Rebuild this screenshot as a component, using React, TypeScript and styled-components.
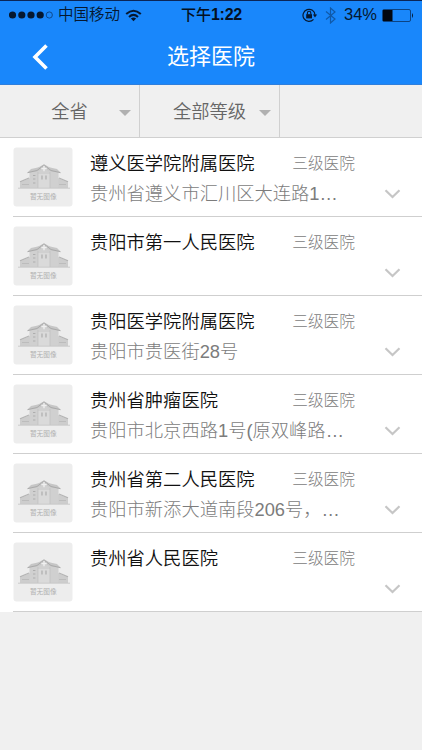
import React from 'react';
import styled, { createGlobalStyle } from 'styled-components';

const GlobalStyle = createGlobalStyle`
  * { box-sizing: border-box; }
  body {
    margin: 0;
    background: #f0f0f0;
    font-family: 'Liberation Sans', 'Noto Sans CJK SC', sans-serif;
  }
`;

const Screen = styled.div`
  width: 422px;
  height: 750px;
  background: #f0f0f0;
  overflow: hidden;
`;

const Top = styled.header`
  height: 85px;
  background: #1987fb;
  border-top: 1px solid #0b2556;
  border-bottom: 1px solid #2f7fdc;
`;

const StatusBar = styled.div`
  height: 28px;
  display: grid;
  grid-template-columns: 182px 1fr auto;
  align-items: center;
  padding: 0 8px 0 9px;
  color: #06182f;
  line-height: 28px;
  white-space: nowrap;
  svg { display: block; }
`;

const StatusGroup = styled.div<{ $gap?: number }>`
  display: flex;
  align-items: center;
  gap: ${(p) => p.$gap ?? 0}px;
`;

const Carrier = styled.span`
  font-weight: 350;
  font-size: 15.5px;
`;

const Clock = styled.div`
  margin-left: -10px;
  font-weight: 500;
  font-size: 15px;
  color: #041020;
`;

const ClockDigits = styled.b`
  font-size: 16px;
  letter-spacing: -0.3px;
`;

const Percent = styled.span`
  font-size: 16.5px;
  line-height: 26px;
  margin: 0 5px 2px 8px;
`;

const BluetoothIcon = styled.svg`
  margin-left: 7px;
`;

const NavBar = styled.div`
  height: 55px;
  display: grid;
  grid-template-columns: 80px 1fr 80px;
  align-items: center;
`;

const BackButton = styled.button`
  border: 0;
  background: none;
  padding: 0 0 0 32px;
  display: flex;
`;

const Title = styled.h1`
  margin: 0;
  color: #fff;
  font-size: 22px;
  font-weight: 400;
  line-height: 32px;
  text-align: center;
`;

const Filters = styled.nav`
  height: 53px;
  display: flex;
  border-bottom: 1px solid #d0d0d0;
`;

const Filter = styled.button`
  width: 140px;
  border: 0;
  border-right: 1px solid #d0d0d0;
  background: none;
  display: flex;
  align-items: center;
  padding: 2px 8px 0 20px;
  color: #666;
  font: 350 18.3px/26px 'Liberation Sans', 'Noto Sans CJK SC', sans-serif;
`;

const FilterLabel = styled.span`
  flex: 1;
  text-align: center;
`;

const Caret = styled.i`
  border: 6px solid transparent;
  border-top-color: #b0b0b0;
  border-bottom: 0;
  margin-top: 2px;
`;

const List = styled.ul`
  margin: 0;
  padding: 0 0 0 13px;
  list-style: none;
  background: #fff;
`;

const Row = styled.li`
  height: 79px;
  display: flex;
  padding-top: 9px;
  border-bottom: 1px solid #cfcfcf;
`;

const Thumb = styled.svg`
  display: block;
  flex: none;
  width: 60px;
  height: 60px;
`;

const Info = styled.div`
  width: 266px;
  margin-left: 17px;
  padding-top: 2px;
`;

const Line = styled.div`
  display: flex;
  height: 30px;
  justify-content: space-between;
`;

const Name = styled.span`
  color: #111;
  font-size: 18.3px;
  line-height: 30px;
  font-weight: 350;
`;

const Level = styled.span`
  color: #808080;
  font-size: 15.7px;
  line-height: 30px;
  font-weight: 300;
  margin-right: 1px;
`;

const Address = styled.div`
  color: #7c7c7c;
  font-size: 18.3px;
  font-weight: 300;
  line-height: 30px;
  white-space: nowrap;
`;

const Toggle = styled.button`
  border: 0;
  background: none;
  padding: 0;
  margin: 42px 0 0 28px;
  height: 10px;
`;

const ChevronIcon = styled.svg`
  display: block;
`;

const Wifi = () => (
  <svg width="17" height="13" viewBox="0 0 17 13">
    <g fill="none" stroke="#06182f" strokeWidth="2">
      <path d="M1.2 5.1 Q8.5 -1.7 15.8 5.1" />
      <path d="M4 8 Q8.5 3.8 13 8" />
    </g>
    <path d="M8.5 12.2 L5.9 9.6 Q8.5 7.6 11.1 9.6 Z" fill="#06182f" />
  </svg>
);

const RotationLock = () => (
  <svg width="16" height="14" viewBox="0 0 16 14">
    <path d="M11.5 11.3 A6 6 0 1 1 13 7" fill="none" stroke="#06182f" strokeWidth="1.2" />
    <path d="M10.9 6.5 H15.1 L13 9.4 Z" fill="#06182f" />
    <rect x="4.2" y="6.2" width="5.8" height="4.2" fill="#06182f" />
    <path d="M5.4 6.5 V5 a1.7 1.7 0 0 1 3.4 0 V6.5" fill="none" stroke="#06182f" strokeWidth="1.1" />
  </svg>
);

const Bluetooth = () => (
  <BluetoothIcon width="11" height="17" viewBox="0 0 11 17">
    <path d="M1 4.5 L10 12 L5.5 16 V1 L10 5 L1 12.5" fill="none" stroke="#1059a8" strokeWidth="1.2" />
  </BluetoothIcon>
);

const Battery = () => (
  <svg width="32" height="13" viewBox="0 0 32 13">
    <rect x="0.5" y="0.5" width="28" height="12" rx="1.5" fill="none" stroke="#0c4382" />
    <rect x="1" y="1" width="9.5" height="11" fill="#020710" />
    <path d="M30 4 q2 2.5 0 5z" fill="#06182f" />
  </svg>
);

const NoImage = () => (
  <Thumb viewBox="0 0 60 60">
    <rect x="0.5" y="0.5" width="59" height="59" rx="3" fill="#ededed" />
    <path d="M7 40.5 V35.5 L17 31 V41 H7z M55 40.5 V35.5 L45 31 V41 H55z" fill="#cdcdcd" />
    <path d="M7 34.8 L16 31 M55 34.8 L46 31" stroke="#b5b5b5" strokeWidth="1.3" />
    <path d="M16.5 41 V25 L31 17.5 L45.5 25 V41z" fill="#d0d0d0" />
    <path d="M25 41 V27 H37 V41z" fill="#dadada" />
    <path d="M14.5 25.5 L18 22 L26 20.3 L31 17.2 L36 20.3 L44 22 L47.5 25.5 L38 24.5 L31 21.5 L24 24.5z" fill="#c6c6c6" />
    <path d="M14.5 25.7 L24 23.5 L31 18 L38 23.5 L47.5 25.7" fill="none" stroke="#aaa" strokeWidth="1" />
    <path d="M31 18.8 V24.2 M28.3 21.5 H33.7" stroke="#f0f0f0" strokeWidth="1.3" />
    <path d="M25 25 V41 M37 25 V41" stroke="#bebebe" strokeWidth="0.7" />
    <path d="M20 28.5h2.4 M20 32h2.4 M20 36h2.4 M29 28.5v4 M33 28.5v4" stroke="#adadad" strokeWidth="1.2" />
    <path d="M9 37.5h7 M46 37.5h7" stroke="#bcbcbc" strokeWidth="1.2" />
    <path d="M5 41.2 H57" stroke="#c6c6c6" strokeWidth="0.9" />
    <text x="30.3" y="52.2" textAnchor="middle" fontSize="6.7" fill="#b0b0b0" fontFamily="Noto Sans CJK SC, sans-serif">暂无图像</text>
  </Thumb>
);

const hospitals = [
  { name: '遵义医学院附属医院', address: '贵州省遵义市汇川区大连路1…' },
  { name: '贵阳市第一人民医院', address: '' },
  { name: '贵阳医学院附属医院', address: '贵阳市贵医街28号' },
  { name: '贵州省肿瘤医院', address: '贵阳市北京西路1号(原双峰路…' },
  { name: '贵州省第二人民医院', address: '贵阳市新添大道南段206号，…' },
  { name: '贵州省人民医院', address: '' },
];

export default function App() {
  return (
    <Screen lang="zh-CN">
      <GlobalStyle />
      <Top>
        <StatusBar>
          <StatusGroup $gap={5}>
            <svg width="44" height="8" viewBox="0 0 44 8">
              {[3.5, 12.8, 22, 31.2].map((x) => (
                <circle key={x} cx={x} cy="4" r="3.6" fill="#06182f" />
              ))}
              <circle cx="40.3" cy="4" r="3.1" fill="none" stroke="#0d3c73" strokeWidth="0.8" />
            </svg>
            <Carrier>中国移动</Carrier>
            <Wifi />
          </StatusGroup>
          <Clock>下午<ClockDigits>1:22</ClockDigits></Clock>
          <StatusGroup>
            <RotationLock />
            <Bluetooth />
            <Percent>34%</Percent>
            <Battery />
          </StatusGroup>
        </StatusBar>
        <NavBar>
          <BackButton aria-label="返回">
            <svg width="17" height="26" viewBox="0 0 17 26">
              <path d="M14.5 1.5 L3 13 L14.5 24.5" fill="none" stroke="#fff" strokeWidth="3.6" />
            </svg>
          </BackButton>
          <Title>选择医院</Title>
        </NavBar>
      </Top>
      <Filters>
        <Filter><FilterLabel>全省</FilterLabel><Caret /></Filter>
        <Filter><FilterLabel>全部等级</FilterLabel><Caret /></Filter>
      </Filters>
      <List>
        {hospitals.map((h) => (
          <Row key={h.name}>
            <NoImage />
            <Info>
              <Line>
                <Name>{h.name}</Name>
                <Level>三级医院</Level>
              </Line>
              <Address>{h.address}</Address>
            </Info>
            <Toggle aria-label="展开">
              <ChevronIcon width="17" height="10" viewBox="0 0 17 10">
                <path d="M1.5 1.3 L8.5 8 L15.5 1.3" fill="none" stroke="#c6c6c6" strokeWidth="2.2" />
              </ChevronIcon>
            </Toggle>
          </Row>
        ))}
      </List>
    </Screen>
  );
}
